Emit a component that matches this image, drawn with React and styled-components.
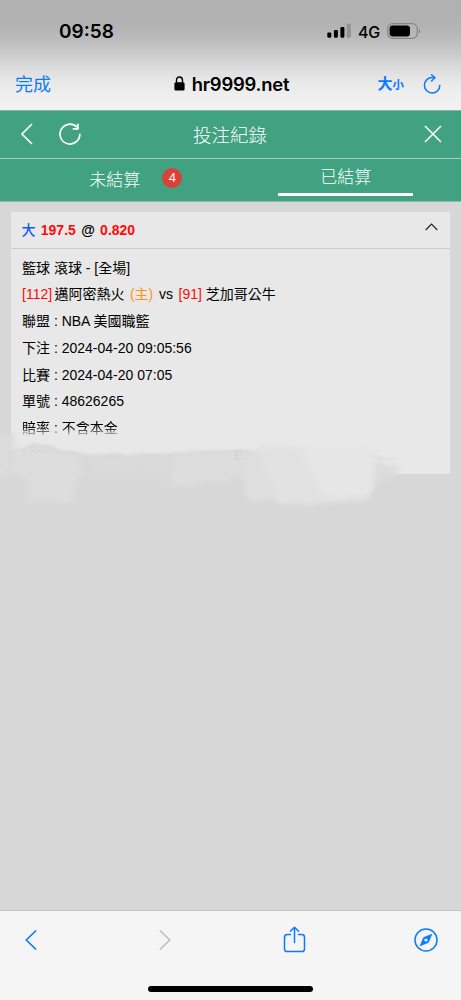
import styled, { createGlobalStyle } from 'styled-components';

const GlobalStyle = createGlobalStyle`
  * {
    box-sizing: border-box;
  }

  body {
    margin: 0;
    background-color: #d7d7d7;
    font-family: 'Liberation Sans', 'Noto Sans CJK TC', sans-serif;
    color: #000;
  }
`;

const Screen = styled.div`
  display: flex;
  flex-direction: column;
  width: 461px;
  height: 1000px;
  overflow: hidden;
  background-color: #d7d7d7;
`;

const BrowserTop = styled.header`
  height: 110px;
  flex-shrink: 0;
  background: linear-gradient(
    #b1b1b1 0,
    #b2b2b2 24px,
    #bababa 38px,
    #cbcbcb 54px,
    #dcdcdc 68px,
    #e8e8e8 82px,
    #efefef 96px,
    #f2f2f2 110px
  );
`;

const StatusBar = styled.div`
  display: flex;
  align-items: center;
  justify-content: space-between;
  height: 62px;
  padding: 0 40px 0 59px;
  font-family: Inter, sans-serif;
`;

const Clock = styled.span`
  font-size: 19px;
  font-weight: 600;
  letter-spacing: 0;
`;

const StatusIcons = styled.div`
  display: flex;
  align-items: center;
`;

const Network = styled.span`
  width: 22px;
  margin: 1px 7px 0 7px;
  font-size: 16px;
  font-weight: 500;
  letter-spacing: -0.3px;
  white-space: nowrap;
`;

const AddressBar = styled.div`
  display: grid;
  grid-template-columns: 1fr auto 1fr;
  align-items: center;
  height: 43px;
  padding: 0 20px 0 15px;
`;

const Done = styled.span`
  padding-bottom: 2px;
  color: #0a7aff;
  font-family: 'Noto Sans CJK TC', sans-serif;
  font-size: 18px;
  line-height: 24px;
`;

const Address = styled.div`
  display: flex;
  align-items: center;
  gap: 7px;
  margin-left: 7px;
  font-family: Inter, sans-serif;
  font-size: 18.4px;
  font-weight: 600;
  letter-spacing: -0.2px;
`;

const AddressActions = styled.div`
  display: flex;
  align-items: center;
  justify-content: flex-end;
  gap: 19px;
`;

const TextSize = styled.span`
  color: #0a7aff;
  font-family: 'Noto Sans CJK TC', sans-serif;
  font-size: 15px;
  font-weight: 700;
  line-height: 22px;

  small {
    font-size: 11.5px;
  }
`;

const NavBar = styled.nav`
  display: flex;
  align-items: center;
  justify-content: space-between;
  flex-shrink: 0;
  height: 49px;
  padding: 0 19px 2px 21px;
  background-color: #40a280;
  border-top: 1px solid #86bba8;
  border-bottom: 1px solid #b2c9c0;
`;

const NavLeft = styled.div`
  display: flex;
  align-items: center;
  gap: 26px;
  width: 60px;
`;

const NavRight = styled.div`
  display: flex;
  justify-content: flex-end;
  width: 63px;
`;

const Title = styled.h1`
  margin: 4px 0 0;
  color: #fff;
  font-size: 18.5px;
  font-weight: 300;
  line-height: 26px;
`;

const Tabs = styled.div`
  display: flex;
  flex-shrink: 0;
  height: 43px;
  background-color: #40a280;
  border-bottom: 1px solid #8dbeac;
`;

const Tab = styled.div`
  display: flex;
  width: 50%;
  justify-content: center;
  color: #fff;
  font-size: 17px;
  font-weight: 300;
  line-height: 24px;
  padding: ${(props) => (props.$active ? '7px 0 0' : '10px 0 0 41px')};
`;

const TabLabel = styled.span`
  height: 30px;
  width: ${(props) => (props.$active ? '135px' : 'auto')};
  text-align: center;
  border-bottom: ${(props) => (props.$active ? '3px solid #fff' : 'none')};
`;

const Badge = styled.span`
  display: flex;
  align-items: center;
  justify-content: center;
  width: 20px;
  height: 20px;
  margin: -1px 0 0 22px;
  border-radius: 50%;
  background-color: #d9423b;
  font-family: 'Noto Sans', sans-serif;
  font-size: 12.5px;
  font-weight: 400;
  line-height: 20px;
`;

const Content = styled.main`
  flex: 1;
  padding: 10px 11px 0;
`;

const Card = styled.section`
  position: relative;
  height: 262px;
  background-color: #e8e8e8;
`;

const CardHeader = styled.div`
  display: flex;
  align-items: center;
  justify-content: space-between;
  height: 37px;
  padding: 0 12px 0 10.5px;
  border-bottom: 1px solid #cdcdcd;
`;

const Odds = styled.div`
  font-size: 14px;
  font-weight: 700;
  line-height: 20px;
  word-spacing: 1.4px;
`;

const Tag = styled.span`
  color: ${(props) => props.$color};
  font-weight: ${(props) => (props.$medium ? 500 : 'inherit')};
`;

const CardBody = styled.div`
  padding: 5.5px 11px 0;
`;

const Row = styled.div`
  height: 26.75px;
  font-size: 14px;
  line-height: 26.75px;
  white-space: pre;
`;

const Team = styled.span`
  margin: 0 1.5px 0 -1.5px;
`;

const Versus = styled.span`
  margin: 0 1.5px 0 2px;
`;

const Faded = styled.span`
  color: transparent;
  background: linear-gradient(#000 45%, #999 85%);
  background-clip: text;
  -webkit-background-clip: text;
`;

const Smudge = styled.svg`
  position: absolute;
  left: -11px;
  top: 208px;
`;

const Toolbar = styled.footer`
  display: flex;
  flex-direction: column;
  align-items: center;
  justify-content: space-between;
  flex-shrink: 0;
  height: 90px;
  padding: 15px 0 8px;
  background-color: #f5f5f5;
  border-top: 1px solid #c3c3c3;
`;

const ToolbarIcons = styled.div`
  display: flex;
  align-items: center;
  justify-content: space-between;
  width: 100%;
  padding: 0 23px 0 19px;
`;

const HomeIndicator = styled.div`
  width: 165px;
  height: 6px;
  border-radius: 3px;
  background-color: #000;
`;

const details = [
  ['聯盟', 'NBA 美國職籃'],
  ['下注', '2024-04-20 09:05:56'],
  ['比賽', '2024-04-20 07:05'],
  ['單號', '48626265'],
];

function SignalIcon() {
  return (
    <svg width="24" height="16" viewBox="0 0 24 16">
      <rect x="0.3" y="9.4" width="4" height="5.3" rx="1.1" />
      <rect x="6.9" y="7" width="4" height="7.7" rx="1.1" />
      <rect x="13.4" y="4" width="4" height="10.7" rx="1.1" />
      <rect x="19.8" y="0.8" width="4" height="13.9" rx="1.1" fill="#929292" />
    </svg>
  );
}

function BatteryIcon() {
  return (
    <svg width="34" height="16" viewBox="0 0 34 16">
      <rect x="0.7" y="0.7" width="29.6" height="14.6" rx="4.8" fill="none" stroke="#858585" strokeWidth="1.2" />
      <rect x="2.6" y="2.6" width="20.4" height="10.8" rx="3.2" />
      <path d="M31.8 5.6c1.8.7 1.8 4.1 0 4.8z" fill="#858585" />
    </svg>
  );
}

function LockIcon() {
  return (
    <svg width="11" height="15" viewBox="0 0 11 15">
      <rect x="0.4" y="6.2" width="10.2" height="8.2" rx="1.5" />
      <path d="M2.5 7V4.2C2.5 2.2 3.7 1 5.5 1s3 1.2 3 3.2V7" fill="none" stroke="#000" strokeWidth="1.4" />
    </svg>
  );
}

function ReloadIcon() {
  return (
    <svg width="18" height="20" viewBox="0 0 18 20" fill="none" stroke="#0a7aff" strokeWidth="1.5" strokeLinecap="round" strokeLinejoin="round">
      <path d="M16.8 11.2a7.7 7.7 0 1 1-7.7-7.6H11.7" />
      <path d="M8.6 0.8l3.3 2.9-3.3 3.3" />
    </svg>
  );
}

function NavBackIcon() {
  return (
    <svg width="12" height="22" viewBox="0 0 12 22" fill="none" stroke="#fff" strokeWidth="1.6">
      <path d="M11 1L1 11l10 10" />
    </svg>
  );
}

function NavRefreshIcon() {
  return (
    <svg width="22" height="22" viewBox="0 0 22 22" fill="none" stroke="#fff" strokeWidth="1.7">
      <path d="M20.8 10.7A9.9 9.9 0 1 1 18 4.2" />
      <path d="M18.9 0.8v5h-5.2" />
    </svg>
  );
}

function CloseIcon() {
  return (
    <svg width="18" height="18" viewBox="0 0 18 18" stroke="#fff" strokeWidth="1.6">
      <path d="M1 1l16 16M17 1L1 17" />
    </svg>
  );
}

function CollapseIcon() {
  return (
    <svg width="13" height="14" viewBox="0 0 13 14" fill="none" stroke="#222" strokeWidth="1.1">
      <path d="M0.7 7l5.8-6 5.8 6" />
    </svg>
  );
}

function BackIcon() {
  return (
    <svg width="24" height="24" viewBox="0 0 24 24" fill="none" stroke="#0a7aff" strokeWidth="1.7" strokeLinecap="round" strokeLinejoin="round">
      <path d="M16.6 3L7.2 12l9.4 9" />
    </svg>
  );
}

function ForwardIcon() {
  return (
    <svg width="24" height="24" viewBox="0 0 24 24" fill="none" stroke="#bfbfbf" strokeWidth="1.7" strokeLinecap="round" strokeLinejoin="round">
      <path d="M9.4 3l9.4 9-9.4 9" />
    </svg>
  );
}

function ShareIcon() {
  return (
    <svg width="24" height="28" viewBox="0 0 24 28" fill="none" stroke="#0a7aff" strokeWidth="1.5" strokeLinecap="round" strokeLinejoin="round">
      <path d="M8.5 8.6H5.5C3.5 8.6 2.5 9.4 2.5 11.2v11.7c0 1.8 1 2.7 3 2.7h14c2 0 3-.9 3-2.7V11.2c0-1.8-1-2.6-3-2.6h-3" />
      <path d="M12.5 16.6V1.4M8.4 5.2L12.5 1.3l4.1 3.9" />
    </svg>
  );
}

function CompassIcon() {
  return (
    <svg width="24" height="24" viewBox="0 0 24 24">
      <circle cx="12" cy="12" r="11" fill="none" stroke="#0a7aff" strokeWidth="1.5" />
      <path d="M17.8 6.2l-3.4 8.2-8.2 3.4 3.4-8.2z" fill="#0a7aff" stroke="#0a7aff" strokeWidth="0.7" strokeLinejoin="round" />
      <circle cx="12" cy="12" r="1.6" fill="#f5f5f5" />
    </svg>
  );
}

function BrushSmudge() {
  return (
    <Smudge width="461" height="100" viewBox="0 0 461 100">
      <defs>
        <filter id="edge" x="-10%" y="-20%" width="120%" height="140%">
          <feTurbulence type="fractalNoise" baseFrequency="0.04 0.2" numOctaves="3" seed="4" result="noise" />
          <feDisplacementMap in="SourceGraphic" in2="noise" scale="5" xChannelSelector="R" yChannelSelector="G" />
          <feGaussianBlur stdDeviation="1" />
        </filter>
        <filter id="soft" x="-30%" y="-30%" width="160%" height="160%">
          <feTurbulence type="fractalNoise" baseFrequency="0.06 0.25" numOctaves="3" seed="9" result="noise" />
          <feDisplacementMap in="SourceGraphic" in2="noise" scale="9" xChannelSelector="R" yChannelSelector="G" />
          <feGaussianBlur stdDeviation="2.8" />
        </filter>
      </defs>
      <path d="M-4 16L14 13v43H-4z" fill="#dcdcdc" filter="url(#soft)" />
      <path d="M8 31l14-3 12-5 26 6 24 5 42 1 64-4 60-1 16 22 40 8H8z" fill="#d8d8d8" filter="url(#edge)" />
      <g filter="url(#soft)">
        <path d="M12 28l22-1 44 9 6 14-10 12v20H28V58L10 50z" fill="#dddddd" />
        <path d="M90 36l80 0 10 12-90 2z" fill="#dadada" />
        <path d="M174 33l60-3 8 20-14 10-58 8z" fill="#dddddd" />
        <path d="M234 32l34-2 12 52-34-2-4-26z" fill="#dedede" />
        <path d="M256 26h118l4 28-8 25-26 3-62 4-10-20z" fill="#e2e2e2" />
        <path d="M300 26h74l2 32-6 18-44 3z" fill="#e6e6e6" />
        <path d="M374 48l4-6 22 6-4 7-22 10z" fill="#dcdcdc" />
      </g>
      <path d="M373 35l28 4-22 2z" fill="#dedede" filter="url(#edge)" />
      <path d="M24 30v6M31 31h4M38 31h5M234 31h8M234 35h7M236 30v10M235 39h8" fill="none" stroke="#d2d2d2" strokeWidth="1" />
    </Smudge>
  );
}

function App() {
  return (
    <>
      <GlobalStyle />
      <Screen>
        <BrowserTop>
          <StatusBar>
            <Clock>09:58</Clock>
            <StatusIcons>
              <SignalIcon />
              <Network>4G</Network>
              <BatteryIcon />
            </StatusIcons>
          </StatusBar>
          <AddressBar>
            <Done>完成</Done>
            <Address>
              <LockIcon />
              <span>hr9999.net</span>
            </Address>
            <AddressActions>
              <TextSize>
                大<small>小</small>
              </TextSize>
              <ReloadIcon />
            </AddressActions>
          </AddressBar>
        </BrowserTop>

        <NavBar>
          <NavLeft>
            <NavBackIcon />
            <NavRefreshIcon />
          </NavLeft>
          <Title>投注紀錄</Title>
          <NavRight>
            <CloseIcon />
          </NavRight>
        </NavBar>
        <Tabs>
          <Tab>
            <TabLabel>未結算</TabLabel>
            <Badge>4</Badge>
          </Tab>
          <Tab $active>
            <TabLabel $active>已結算</TabLabel>
          </Tab>
        </Tabs>

        <Content>
          <Card>
            <BrushSmudge />
            <CardHeader>
              <Odds>
                <Tag $color="#0a5cff" $medium>大</Tag> <Tag $color="#ff0a0a">197.5</Tag> @{' '}
                <Tag $color="#ff0a0a">0.820</Tag>
              </Odds>
              <CollapseIcon />
            </CardHeader>
            <CardBody>
              <Row>籃球 滾球 - [全場]</Row>
              <Row>
                <Tag $color="#ff0a0a">[112]</Tag> <Team>邁阿密熱火</Team> <Tag $color="#ff9212">(主)</Tag>{' '}
                <Versus>vs</Versus> <Tag $color="#ff0a0a">[91]</Tag> 芝加哥公牛
              </Row>
              {details.map(([label, value]) => (
                <Row key={label}>
                  {label} : {value}
                </Row>
              ))}
              <Row>
                <Faded>賠率 : 不含本金</Faded>
              </Row>
            </CardBody>
          </Card>
        </Content>

        <Toolbar>
          <ToolbarIcons>
            <BackIcon />
            <ForwardIcon />
            <ShareIcon />
            <CompassIcon />
          </ToolbarIcons>
          <HomeIndicator />
        </Toolbar>
      </Screen>
    </>
  );
}

export default App;
